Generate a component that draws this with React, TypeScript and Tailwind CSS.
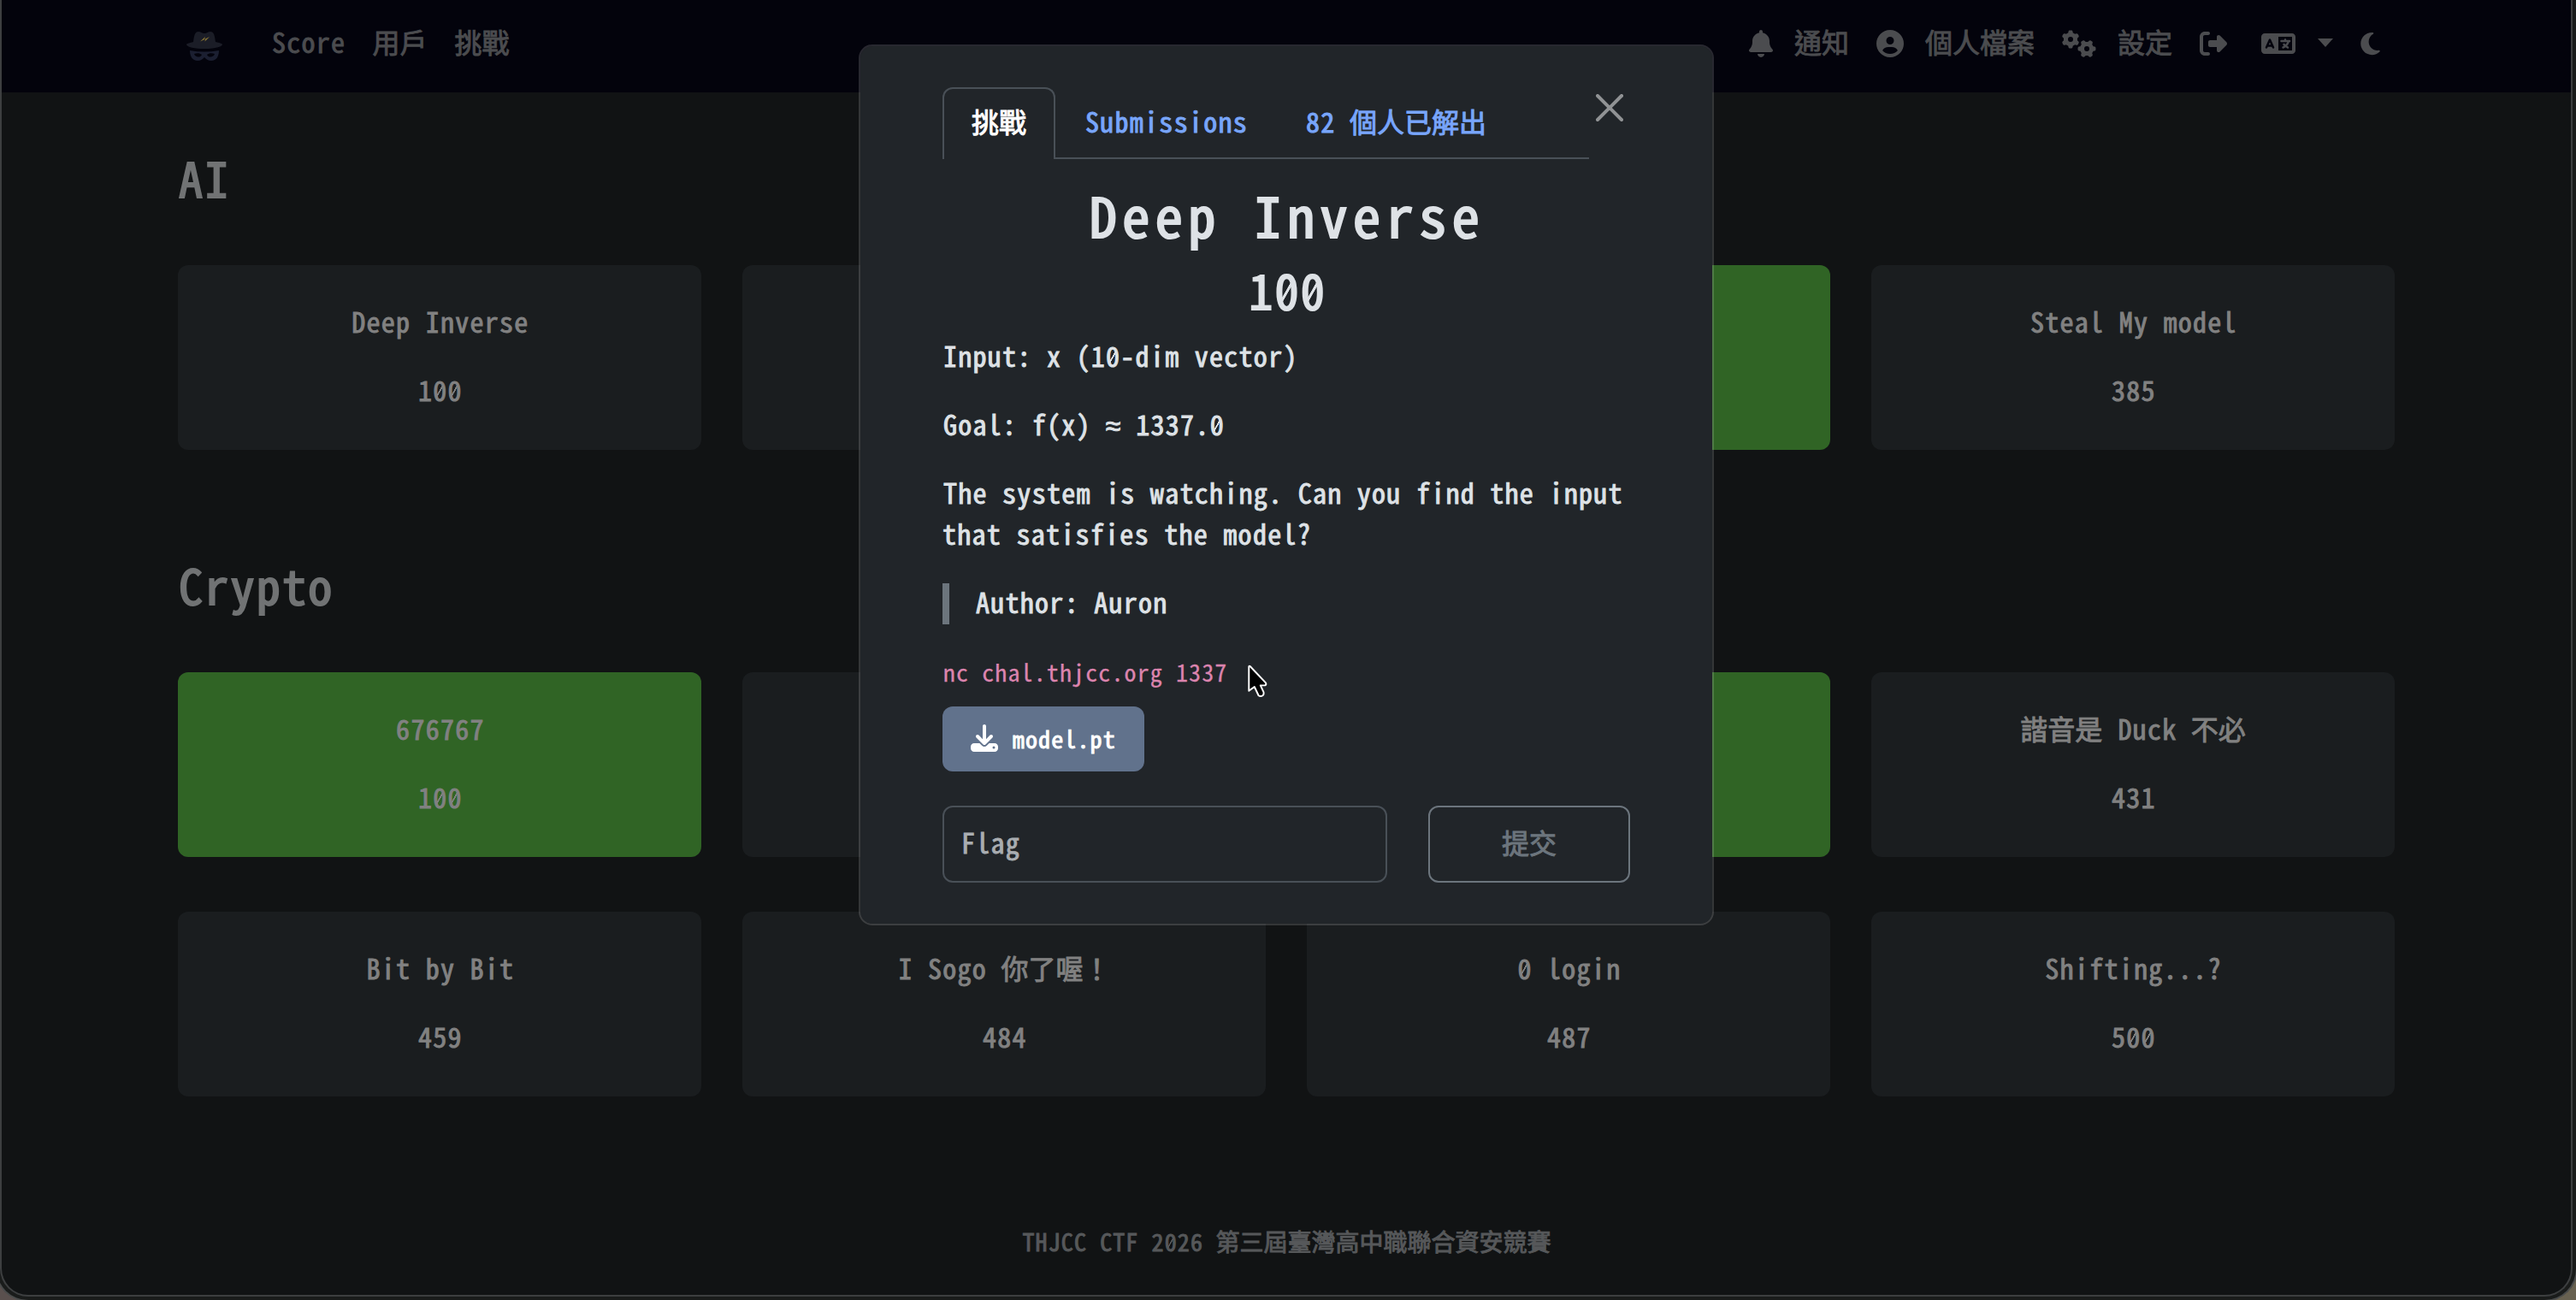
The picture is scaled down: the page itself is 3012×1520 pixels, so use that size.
import { FaBell, FaCircleUser, FaDownload, FaGears, FaLanguage, FaMoon, FaRightFromBracket } from 'react-icons/fa6'

type Challenge = { name: string; points: number; solved?: boolean }

const categories: { title: string; challenges: Challenge[] }[] = [
  {
    title: 'AI',
    challenges: [
      { name: 'Deep Inverse', points: 100 },
      { name: '', points: 0 },
      { name: '', points: 0, solved: true },
      { name: 'Steal My model', points: 385 },
    ],
  },
  {
    title: 'Crypto',
    challenges: [
      { name: '676767', points: 100, solved: true },
      { name: '', points: 0 },
      { name: '', points: 0, solved: true },
      { name: '諧音是 Duck 不必', points: 431 },
      { name: 'Bit by Bit', points: 459 },
      { name: 'I Sogo 你了喔！', points: 484 },
      { name: '0 login', points: 487 },
      { name: 'Shifting...?', points: 500 },
    ],
  },
]

// the mono font has a plain zero, so the slash is painted behind it
function Latin({ children }: { children: string }) {
  return (
    <>
      {children.split(/(0)/).map((s, i) => s === '0'
        ? <span key={i} className="bg-[linear-gradient(to_bottom_right,transparent_43%,currentColor_45%,currentColor_55%,transparent_57%)] bg-no-repeat bg-size-[0.26em_0.46em] bg-position-[0.12em_0.565em]">0</span>
        : s)}
    </>
  )
}

// Latin runs are tracked out slightly, CJK runs stay on the full em grid
function Mix({ children }: { children: string }) {
  const runs = children.match(/[\x20-\x7e]+|≈|[^\x20-\x7e≈]+/g) ?? []
  return (
    <>
      {runs.map((r, i) => {
        if (r === '≈') return <span key={i} className="font-['Liberation_Mono',monospace] leading-none -ml-[0.01em] -mr-[0.03em]">{r}</span>
        if (/^[\x20-\x7e]/.test(r)) return <span key={i} className="tracking-[0.04em] ml-[0.03em] -mr-[0.03em]"><Latin>{r}</Latin></span>
        return <span key={i}>{r}</span>
      })}
    </>
  )
}

function Logo() {
  return (
    <svg viewBox="0 0 42 36" className="w-[42px] h-[36px] mt-[11px]">
      <path d="M8 13 C9 5 10 1 14 1 C17 1 18 3 21 3 C24 3 25 1 28 1 C32 1 33 5 34 13 C38 14 42 15 42 16 C42 19 32 21 21 21 C10 21 0 19 0 16 C0 15 4 14 8 13Z" fill="#1b1d27" />
      <path d="M16 12.500 L22 7 L21 10 L27 7 L21.500 12.500 L22 9.800Z" fill="#877435" />
      <path fillRule="evenodd" d="M4 23 Q21 26 38 23 C38 30 35 35 29 35 C25 35 23 33 21 31 C19 33 17 35 13 35 C7 35 4 30 4 23Z M9 27 C10 31 16 32 18 28 C16 26 12 26 9 27Z M33 27 C32 31 26 32 24 28 C26 26 30 26 33 27Z" fill="#1b1f31" />
    </svg>
  )
}

function Navbar() {
  return (
    <nav className="h-[108px] bg-[#03030c] text-[#4b4c4f] pl-[216px] pr-[222px] pb-[12px] flex items-center justify-between leading-[48px]">
      <div className="flex items-center">
        <Logo />
        <div className="flex gap-8 ml-[57px]">
          <span><Mix>Score</Mix></span>
          <span>用戶</span>
          <span>挑戰</span>
        </div>
      </div>
      <div className="flex items-center">
        <FaBell className="w-[28px] h-[32px] mt-[5px]" />
        <span className="ml-[25px]">通知</span>
        <FaCircleUser className="w-[32px] h-[32px] ml-[32px] mt-[5px]" />
        <span className="ml-[25px]">個人檔案</span>
        <FaGears className="w-[40px] h-[32px] ml-[32px] mt-[5px]" />
        <span className="ml-[25px]">設定</span>
        <FaRightFromBracket className="w-[32px] h-[32px] ml-[32px] mt-[5px]" />
        <FaLanguage className="w-[40px] h-[32px] ml-[40px] mt-[5px]" />
        <span className="ml-[26px] mt-[4px] border-x-[9px] border-t-[10px] border-x-transparent border-t-[#4b4c4f]" />
        <FaMoon className="w-[25px] h-[30px] ml-[31px] mt-[5px]" />
      </div>
    </nav>
  )
}

function Card({ c }: { c: Challenge }) {
  return (
    <div className={`h-[216px] rounded-xl text-center text-[#818181] leading-[48px] pt-[41px] ${c.solved ? 'bg-[#306425]' : 'bg-[#1a1d1f]'}`}>
      {c.name && (
        <>
          <p><Mix>{c.name}</Mix></p>
          <p className="mt-8"><Mix>{String(c.points)}</Mix></p>
        </>
      )}
    </div>
  )
}

function Cursor() {
  return (
    <svg viewBox="0 0 24 38" className="absolute left-[1457px] top-[776px] w-[26px] h-[41px]">
      <path d="M3 3 V29.500 L9 25 L13.500 34.500 Q15.500 36 18 34.500 Q19.500 33 19 31 L15.500 23.500 H20.500 Q22.500 22.500 21 20.500 L4.500 3 Q3.500 2 3 3Z" fill="#000" stroke="#fff" strokeWidth="1.800" strokeLinejoin="round" />
    </svg>
  )
}

function Modal() {
  return (
    <div className="absolute left-[1004px] top-[52px] w-[1000px] h-[1030px] rounded-2xl border-2 border-white/15 bg-[#212529] bg-clip-padding text-[#dee2e6] px-24 pt-12">
      <div className="flex justify-between">
        <div className="w-[756px] h-[84px] flex text-[#78a5fb] leading-[48px]">
          <div className="border-2 border-b-0 border-[#495057] rounded-t-xl px-8 pt-[13px] text-white">挑戰</div>
          <div className="grow flex border-b-2 border-[#495057]">
            <div className="px-[34px] pt-[15px]"><Mix>Submissions</Mix></div>
            <div className="px-[34px] pt-[15px]"><Mix>82 個人已解出</Mix></div>
          </div>
        </div>
        <svg viewBox="0 0 16 16" className="size-8 mt-2 mr-2 shrink-0" fill="#909294">
          <path d="M.293.293a1 1 0 0 1 1.414 0L8 6.586 14.293.293a1 1 0 1 1 1.414 1.414L9.414 8l6.293 6.293a1 1 0 0 1-1.414 1.414L8 9.414l-6.293 6.293a1 1 0 0 1-1.414-1.414L6.586 8 .293 1.707a1 1 0 0 1 0-1.414z" />
        </svg>
      </div>
      <h2 className="mt-[26px] pl-0.5 text-center text-[64px] leading-[76px] tracking-[0.1025em] [-webkit-text-stroke:0.035em]">Deep Inverse</h2>
      <h3 className="mt-4 pl-[3px] text-center text-[56px] leading-[68px] tracking-[0.04em] [-webkit-text-stroke:0.035em]"><Latin>100</Latin></h3>
      <div className="mt-[19px] leading-[48px] flex flex-col gap-8">
        <p><Mix>Input: x (10-dim vector)</Mix></p>
        <p className="h-12"><Mix>Goal: f(x) ≈ 1337.0</Mix></p>
        <p><Mix>The system is watching. Can you find the input that satisfies the model?</Mix></p>
      </div>
      <blockquote className="mt-[35px] h-12 border-l-8 border-[#6c757d] pl-[30px] leading-[42px]"><Mix>Author: Auron</Mix></blockquote>
      <p className="mt-[31px] text-[28px] leading-[48px] text-[#dc84ae] [-webkit-text-stroke:0.01em]"><Mix>nc chal.thjcc.org 1337</Mix></p>
      <button className="mt-[17px] w-[236px] h-[76px] rounded-xl bg-[#61728c] text-white text-[28px] flex items-center pl-[33px] pb-[2px]">
        <FaDownload className="size-8" />
        <span className="ml-4"><Mix>model.pt</Mix></span>
      </button>
      <div className="mt-10 flex gap-12 h-[90px] leading-[80px]">
        <div className="w-[520px] rounded-xl border-2 border-[#495057] pl-[19px] text-[#a9adb1]"><Mix>Flag</Mix></div>
        <div className="grow rounded-xl border-2 border-[#6c757d] text-[#6c757d] text-center">提交</div>
      </div>
    </div>
  )
}

export default function App() {
  return (
    <div className="relative w-[3012px] h-[1520px] overflow-hidden bg-[linear-gradient(90deg,#5a504e,#686150)] text-[32px] [-webkit-text-stroke:0.03em] font-['Noto_Sans_Mono_CJK_TC','Noto_Sans_CJK_TC',monospace]">
      {/* browser window frame, running off the left, right and bottom edges */}
      <div className="-ml-[6px] w-[3020px] h-[1522px] rounded-b-[39px] border-2 border-t-0 border-[#494b4b] bg-[#1a1c1b] px-1">
        <div className="w-[3008px] h-[1516px] overflow-hidden rounded-b-[33px] border-2 border-t-0 border-[#3d3f40] bg-[#111314]">
          <Navbar />
          <main className="px-[206px]">
            {categories.map((cat, i) => (
              <section key={cat.title} className={i === 0 ? 'pt-[65px]' : 'pt-[123px]'}>
                <h3 className="pl-px text-[56px] leading-[68px] tracking-[0.04em] text-[#717374] [-webkit-text-stroke:0.035em]">{cat.title}</h3>
                <div className="mt-[69px] grid grid-cols-4 gap-x-12 gap-y-16">
                  {cat.challenges.map((c, j) => <Card key={j} c={c} />)}
                </div>
              </section>
            ))}
          </main>
          <footer className="mt-[145px] text-center text-[28px] leading-[48px] text-[#56585a]"><Mix>THJCC CTF 2026 第三屆臺灣高中職聯合資安競賽</Mix></footer>
        </div>
      </div>
      <Modal />
      <Cursor />
    </div>
  )
}
